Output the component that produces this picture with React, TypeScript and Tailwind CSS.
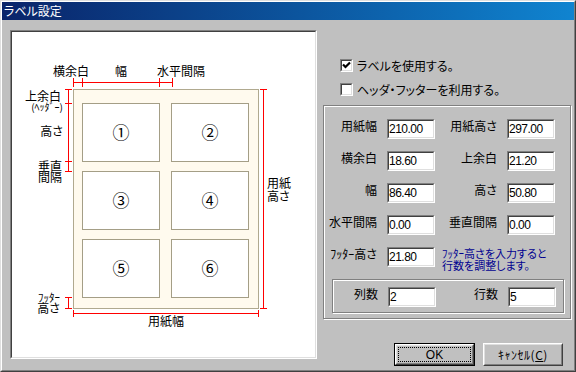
import React from "react";

const cells = [
  { n: "①", x: 82.5, y: 103.5 },
  { n: "②", x: 171.5, y: 103.5 },
  { n: "③", x: 82.5, y: 171.5 },
  { n: "④", x: 171.5, y: 171.5 },
  { n: "⑤", x: 82.5, y: 239.5 },
  { n: "⑥", x: 171.5, y: 239.5 },
];

function Field({ value }: { value: string }) {
  return (
    <div className="w-[48px] h-[20px] border border-t-[#808080] border-l-[#808080] border-r-white border-b-white">
      <div className="h-full bg-white border border-t-[#404040] border-l-[#404040] border-r-[#dfdfdf] border-b-[#dfdfdf] font-['Liberation_Sans',sans-serif] text-[12px] leading-[16px] tracking-[-0.5px] text-black">
        {value}
      </div>
    </div>
  );
}

function Lbl({ children }: { children: React.ReactNode }) {
  return <div className="text-right pr-[10px] text-[12px] leading-[14px] whitespace-nowrap">{children}</div>;
}

function CheckRow({ on, label }: { on?: boolean; label: string }) {
  return (
    <div className="flex items-center gap-[4px] h-[13px] pl-[17px]">
      <div className="w-[13px] h-[13px] border border-t-[#808080] border-l-[#808080] border-r-white border-b-white">
        <div className="h-full bg-white border border-t-[#404040] border-l-[#404040] border-r-[#dfdfdf] border-b-[#dfdfdf]">
          {on && (
            <svg width="9" height="9" viewBox="0 0 9 9" className="block">
              <path d="M1 3.5 L3.5 6 L8 1.5" fill="none" stroke="#000" strokeWidth="2.2" />
            </svg>
          )}
        </div>
      </div>
      <span className="text-[12px] leading-[13px] whitespace-nowrap">{label}</span>
    </div>
  );
}

function Diagram() {
  const red = "#ff0000";
  return (
    <svg width="303" height="325" viewBox="12 32 303 325" className="block">
      <rect x="73.5" y="89.5" width="185" height="219" fill="#fffaee" stroke="#b0a98f" />
      {cells.map((c) => (
        <g key={c.n}>
          <rect x={c.x} y={c.y} width="77" height="58" fill="#fff" stroke="#a49e86" />
          <text x={c.x + 38.5} y={c.y + 35} textAnchor="middle" fontSize="17" fill="#000">
            {c.n}
          </text>
        </g>
      ))}
      <path
        stroke={red}
        fill="none"
        d="M73 82.5 H173 M73.5 78 V87 M82.5 78 V87 M159.5 78 V87 M172.5 78 V87
           M68.5 89 V172 M65 89.5 H72 M65 103.5 H72 M65 161.5 H72 M65 171.5 H72
           M68.5 297 V309 M65 297.5 H72 M65 308.5 H72
           M73 313.5 H259 M73.5 310 V317 M258.5 310 V317
           M263.5 89 V309 M260 89.5 H267 M260 308.5 H267"
      />
      <g fill="#000" fontSize="12">
        <text x="53" y="76">横余白</text>
        <text x="115" y="76">幅</text>
        <text x="157" y="76">水平間隔</text>
        <text textAnchor="end">
          <tspan x="61" y="101">上余白</tspan>
          <tspan x="63" y="111" fontSize="10">(ﾍｯﾀﾞｰ)</tspan>
        </text>
        <text x="63" y="136" textAnchor="end">高さ</text>
        <text textAnchor="end">
          <tspan x="62" y="171">垂直</tspan>
          <tspan x="62" y="182">間隔</tspan>
        </text>
        <text textAnchor="end">
          <tspan x="60" y="302" fontSize="11">ﾌｯﾀｰ</tspan>
          <tspan x="60" y="313">高さ</tspan>
        </text>
        <text x="148" y="326">用紙幅</text>
        <text>
          <tspan x="267" y="188">用紙</tspan>
          <tspan x="267" y="201">高さ</tspan>
        </text>
      </g>
    </svg>
  );
}

export default function App() {
  return (
    <div className="w-[576px] h-[372px] bg-[#c0c0c0] border border-t-[#dfdfdf] border-l-[#dfdfdf] border-r-[#404040] border-b-[#404040] text-black font-['Noto_Sans_CJK_JP','Noto_Sans',sans-serif] [font-feature-settings:'palt']">
      <div className="h-full border border-t-white border-l-white border-r-[#808080] border-b-[#808080] flex flex-col">
        <div className="h-[18px] flex items-center pl-[2px] bg-linear-to-r from-[#0a246a] to-[#1084d0] text-white text-[12px]">
          ラベル設定
        </div>
        <div className="flex pt-[10px] pl-[8px]">
          <div className="w-[307px] h-[329px] border border-t-[#808080] border-l-[#808080] border-r-white border-b-white">
            <div className="h-full bg-white border border-t-[#404040] border-l-[#404040] border-r-[#dfdfdf] border-b-[#dfdfdf]">
              <Diagram />
            </div>
          </div>
          <div className="ml-[6px] w-[248px] flex flex-col">
            <div className="mt-[29px]">
              <CheckRow on label="ラベルを使用する。" />
            </div>
            <div className="mt-[11px]">
              <CheckRow label="ヘッダ・フッターを利用する。" />
            </div>
            <div className="mt-[9px] h-[214px] border border-[#808080] shadow-[inset_1px_1px_0_#fff,1px_1px_0_#fff]">
              <div className="grid grid-cols-[63px_48px_72px_48px] gap-y-[12px] pt-[13px] items-start">
                <Lbl>用紙幅</Lbl>
                <Field value="210.00" />
                <Lbl>用紙高さ</Lbl>
                <Field value="297.00" />
                <Lbl>横余白</Lbl>
                <Field value="18.60" />
                <Lbl>上余白</Lbl>
                <Field value="21.20" />
                <Lbl>幅</Lbl>
                <Field value="86.40" />
                <Lbl>高さ</Lbl>
                <Field value="50.80" />
                <Lbl>水平間隔</Lbl>
                <Field value="0.00" />
                <Lbl>垂直間隔</Lbl>
                <Field value="0.00" />
                <Lbl>ﾌｯﾀｰ高さ</Lbl>
                <Field value="21.80" />
                <div className="col-span-2 pl-[7px] text-[11px] leading-[12px] text-[#000090] whitespace-nowrap">
                  <div>ﾌｯﾀｰ高さを入力すると</div>
                  <div>行数を調整します。</div>
                </div>
              </div>
              <div className="mt-[8px] ml-[8px] mr-[6px] h-[34px] border border-[#808080] shadow-[inset_1px_1px_0_#fff,1px_1px_0_#fff]">
                <div className="grid grid-cols-[55px_48px_72px_48px] pt-[7px] items-start">
                  <Lbl>列数</Lbl>
                  <Field value="2" />
                  <Lbl>行数</Lbl>
                  <Field value="5" />
                </div>
              </div>
            </div>
            <div className="mt-[24px] flex justify-end gap-[8px] pr-[8px]">
              <button className="w-[81px] h-[23px] p-0 border border-black bg-[#c0c0c0]">
                <div className="h-full border border-t-white border-l-white border-r-[#404040] border-b-[#404040]">
                  <div className="h-full p-[1px] border border-t-[#dfdfdf] border-l-[#dfdfdf] border-r-[#808080] border-b-[#808080]">
                    <div className="h-full border border-dotted border-black flex items-center justify-center font-['Liberation_Sans',sans-serif] text-[12px] leading-[12px]">
                      OK
                    </div>
                  </div>
                </div>
              </button>
              <button className="w-[80px] h-[23px] p-0 bg-[#c0c0c0] border border-t-white border-l-white border-r-[#404040] border-b-[#404040]">
                <div className="h-full flex items-center justify-center border border-t-[#dfdfdf] border-l-[#dfdfdf] border-r-[#808080] border-b-[#808080] text-[12px] leading-[12px] tracking-[0.5px] whitespace-nowrap">
                  ｷｬﾝｾﾙ(<span className="underline">C</span>)
                </div>
              </button>
            </div>
          </div>
        </div>
      </div>
    </div>
  );
}
